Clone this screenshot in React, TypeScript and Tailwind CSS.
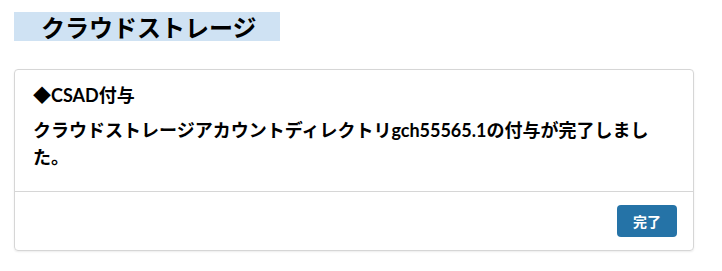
const FONT = "font-['Lato','Noto_Sans_CJK_JP',sans-serif]";

export default function App() {
  return (
    <div className={`w-[722px] h-[271px] bg-white ${FONT} text-black`}>
      <div className="pt-3 pl-[14px]">
        <h1 className="w-[266px] h-[29px] bg-[#cfe2f3] pl-[27px] text-[24px] leading-[29px] font-bold font-['Noto_Sans_CJK_JP',sans-serif]">
          クラウドストレージ
        </h1>
      </div>

      <div className="mt-7 ml-[14px] w-[680px] border border-[#d6d6d6] rounded-[4px] shadow-[0_1px_2px_rgba(0,0,0,0.08)]">
        <div className="pl-[18px] pr-[30px] pt-3 pb-5 text-[18px] leading-[27px] font-bold">
          <p>◆CSAD付与</p>
          <p className="mt-2">
            クラウドストレージアカウントディレクトリgch55565.1の付与が完了しました。
          </p>
        </div>
        <div className="border-t border-[#d6d6d6] flex justify-end pt-[13px] pb-[13px] pr-4">
          <button className="w-[60px] h-[32px] rounded-[4px] bg-[#2573a7] text-white text-[14px] font-bold font-['Noto_Sans_CJK_JP',sans-serif]">
            完了
          </button>
        </div>
      </div>
    </div>
  );
}
